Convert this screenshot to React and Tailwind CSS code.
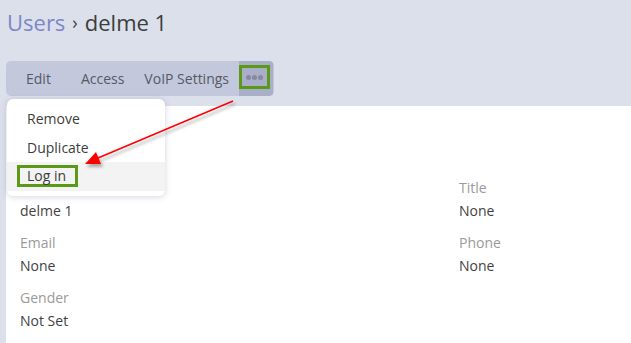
import React from 'react';

const fields = [
  { left: { label: '', value: 'delme 1' }, right: { label: 'Title', value: 'None' } },
  { left: { label: 'Email', value: 'None' }, right: { label: 'Phone', value: 'None' } },
  { left: { label: 'Gender', value: 'Not Set' }, right: null },
];

function Field({ f }) {
  if (!f) return <div />;
  return (
    <div className="flex flex-col">
      <div className="h-[22px] text-[14px] leading-[22px] text-[#9a9a9a]">{f.label}</div>
      <div className="text-[14px] leading-[23px] text-[#3f3f3f]">{f.value}</div>
    </div>
  );
}

export default function App() {
  return (
    <div
      className="relative w-[631px] h-[343px] overflow-hidden bg-[#dbe0eb]"
      style={{ fontFamily: '"Open Sans", "Liberation Sans", sans-serif' }}
    >
      {/* breadcrumb */}
      <div className="pl-[7px] pt-[6px] text-[22px] leading-[32px] flex items-center">
        <span className="text-[#7b87c9]">Users</span>
        <span className="text-[#444] mx-[7px] text-[18px]">›</span>
        <span className="text-[#3d3d3d]">delme 1</span>
      </div>

      {/* toolbar */}
      <div className="mt-[23px] ml-[6px] w-[268px] h-[35px] rounded-[5px] bg-[#c3c8dd] flex items-center overflow-hidden text-[14px] text-[#555a66]">
        <button className="pl-[20px] pr-[30px] h-full">Edit</button>
        <button className="pr-[20px] h-full">Access</button>
        <button className="pr-[10px] h-full">VoIP Settings</button>
        <div className="h-full w-[34px] bg-[#a9aec9] flex items-start">
          <div className="mt-[4px] w-[31px] h-[24px] border-[3px] border-[#5b9a17] flex items-center justify-center gap-[1px]">
            <span className="w-[5px] h-[5px] rounded-full bg-[#868aa1]" />
            <span className="w-[5px] h-[5px] rounded-full bg-[#868aa1]" />
            <span className="w-[5px] h-[5px] rounded-full bg-[#868aa1]" />
          </div>
        </div>
      </div>

      {/* content panel */}
      <div className="mt-[10px] ml-[6px] h-[300px] bg-white pl-[14px] pt-[71px]">
        <div className="grid grid-cols-[439px_1fr] gap-y-[10px]">
          {fields.map((row, i) => (
            <React.Fragment key={i}>
              <Field f={row.left} />
              <Field f={row.right} />
            </React.Fragment>
          ))}
        </div>
      </div>

      {/* dropdown menu */}
      <div className="absolute left-[7px] top-[99px] w-[158px] bg-white rounded-[6px] shadow-[0_1px_6px_rgba(60,70,110,0.22)] py-[5px] text-[14px] text-[#3d3d3d]">
        <div className="h-[29px] flex items-center pl-[20px]">Remove</div>
        <div className="h-[29px] flex items-center pl-[20px]">Duplicate</div>
        <div className="h-[29px] bg-[#f3f3f3] flex items-start pl-[10px]">
          <div className="mt-[3px] w-[61px] h-[22px] border-[3px] border-[#5b9a17] flex items-center pl-[7px] leading-none">
            Log in
          </div>
        </div>
      </div>

      {/* red annotation arrow */}
      <svg className="absolute inset-0 pointer-events-none" width="631" height="343">
        <defs>
          <filter id="sh" x="-20%" y="-20%" width="140%" height="140%">
            <feDropShadow dx="2" dy="3" stdDeviation="1.5" floodColor="#000" floodOpacity="0.3" />
          </filter>
        </defs>
        <g filter="url(#sh)">
          <line x1="233" y1="101" x2="98" y2="158" stroke="#ff0000" strokeWidth="1.6" />
          <polygon points="85,164 96,152 101,164" fill="#ff0000" />
        </g>
      </svg>
    </div>
  );
}
